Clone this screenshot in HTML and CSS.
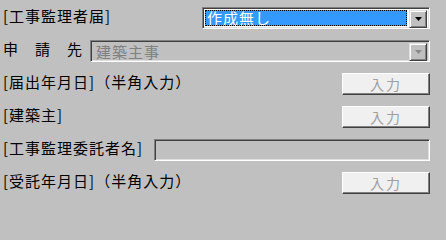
FILE: index.html
```html
<!DOCTYPE html>
<html lang="ja">
<head>
<meta charset="utf-8">
<link rel="stylesheet" href="styles.css">
</head>
<body>
<div class="form">
  <div class="row">
    <span class="label">[工事監理者届]</span>
    <div class="combo combo-main">
      <div class="combo-field"><span class="combo-sel">作成無し</span></div>
      <div class="combo-btn"><svg width="7" height="4" viewBox="0 0 7 4"><path d="M0 0H7L3.5 4Z" fill="#000"/></svg></div>
    </div>
  </div>
  <div class="row">
    <span class="label">申　請　先</span>
    <div class="combo combo-wide disabled">
      <div class="combo-field"><span class="combo-text">建築主事</span></div>
      <div class="combo-btn"><svg width="7" height="4" viewBox="0 0 7 4"><path d="M0 0H7L3.5 4Z" fill="#8a8a8a"/></svg></div>
    </div>
  </div>
  <div class="row">
    <span class="label">[届出年月日]（半角入力）</span>
    <div class="btn">入力</div>
  </div>
  <div class="row">
    <span class="label">[建築主]</span>
    <div class="btn">入力</div>
  </div>
  <div class="row">
    <span class="label">[工事監理委託者名]</span>
    <div class="textbox"></div>
  </div>
  <div class="row">
    <span class="label">[受託年月日]（半角入力）</span>
    <div class="btn">入力</div>
  </div>
</div>
</body>
</html>
```

FILE: styles.css
```css
html, body {
  margin: 0;
  background: #c0c0c0;
}
.form {
  display: flex;
  flex-direction: column;
  gap: 11px;
  padding: 7px 16px 0 3px;
  font-family: "Noto Sans CJK JP", "Noto Sans", sans-serif;
  font-size: 15px;
}
.row {
  display: flex;
  align-items: flex-start;
  height: 22px;
}
.label {
  line-height: 15px;
  letter-spacing: 1px;
  color: #000;
  white-space: nowrap;
  margin-top: 1px;
}
.combo {
  margin-left: auto;
  height: 22px;
  box-sizing: border-box;
  border: 1px solid;
  border-color: #808080 #fff #fff #808080;
  box-shadow: inset 1px 1px #404040, inset -1px -1px #dfdfdf;
  display: flex;
  padding: 2px;
  background: #fff;
}
.combo-main { width: 228px; }
.combo-wide { width: 340px; }
.combo.disabled { background: #c0c0c0; }
.combo-field {
  flex: 1;
  display: flex;
  align-items: center;
  padding-right: 2px;
}
.combo-sel {
  flex: 1;
  height: 16px;
  box-sizing: border-box;
  background: #3399ff;
  color: #fff;
  outline: 1px dotted #000;
  outline-offset: -1px;
  line-height: 15px;
  padding-left: 2px;
  letter-spacing: 1px;
}
.combo-text {
  color: #808080;
  line-height: 15px;
  padding-left: 3px;
  letter-spacing: 1px;
}
.combo-btn {
  width: 18px;
  height: 18px;
  box-sizing: border-box;
  background: #c0c0c0;
  border: 1px solid;
  border-color: #dfdfdf #404040 #404040 #dfdfdf;
  box-shadow: inset 1px 1px #fff, inset -1px -1px #808080;
  display: flex;
  align-items: center;
  justify-content: center;
}
.btn {
  margin-left: auto;
  width: 88px;
  height: 22px;
  box-sizing: border-box;
  background: #f0f0f0;
  border: 1px solid;
  border-color: #fff #404040 #404040 #fff;
  box-shadow: inset -1px -1px #808080;
  color: #a0a0a0;
  font-size: 14px;
  line-height: 20px;
  text-align: center;
  letter-spacing: 2px;
}
.textbox {
  margin-left: auto;
  width: 276px;
  height: 22px;
  box-sizing: border-box;
  border: 1px solid;
  border-color: #808080 #fff #fff #808080;
  box-shadow: inset 1px 1px #404040, inset -1px -1px #dfdfdf;
  background: #c0c0c0;
}
```
